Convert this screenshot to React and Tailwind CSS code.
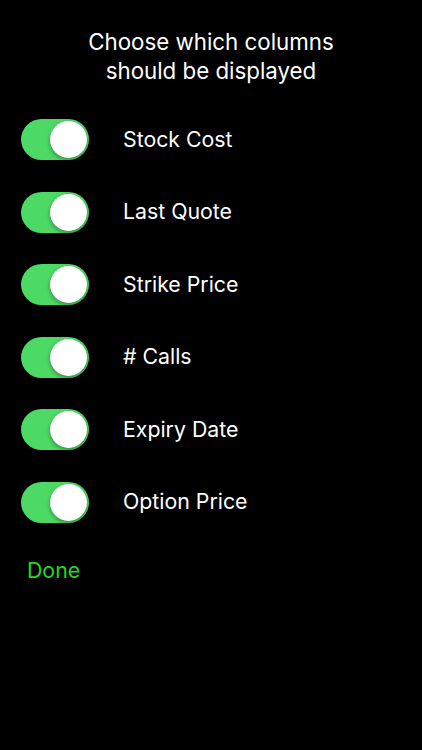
const columns = ['Stock Cost', 'Last Quote', 'Strike Price', '# Calls', 'Expiry Date', 'Option Price']

function Toggle() {
  return (
    <div className="relative w-[68px] h-[41px] rounded-full bg-[#4cd964] shrink-0">
      <div className="absolute right-[2px] top-[2px] w-[37px] h-[37px] rounded-full bg-white shadow-[0_2px_4px_rgba(0,0,0,0.35)]" />
    </div>
  )
}

export default function App() {
  return (
    <div className="w-[422px] h-[750px] bg-black text-white font-['Inter',sans-serif]">
      <div className="pt-[27px] text-center text-[22.3px] leading-[29px]">
        <div>Choose which columns</div>
        <div>should be displayed</div>
      </div>
      <div className="mt-[34px] flex flex-col gap-[31.5px] pl-[21px]">
        {columns.map((c) => (
          <div key={c} className="flex items-center">
            <Toggle />
            <span className="ml-[34px] text-[21.3px]">{c}</span>
          </div>
        ))}
      </div>
      <div className="mt-[32px] pl-[27px] text-[21.3px] text-[#22d822]">Done</div>
    </div>
  )
}
